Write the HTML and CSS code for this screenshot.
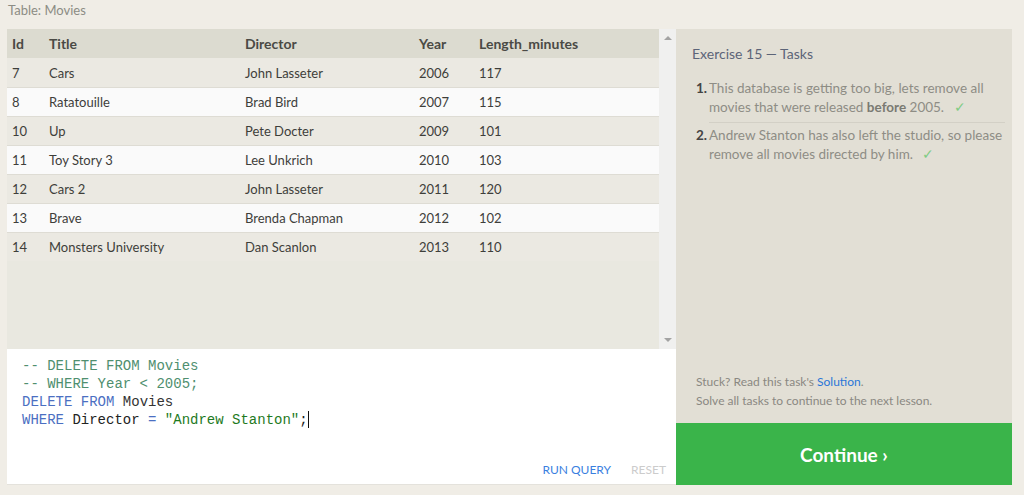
FILE: index.html
```html
<!DOCTYPE html>
<html>
<head>
<meta charset="utf-8">
<link rel="stylesheet" href="styles.css">
</head>
<body>
<div class="page">
  <div class="caption">Table: Movies</div>
  <div class="main">
    <div class="left">
      <div class="table-wrap">
        <div class="table-area">
          <table class="grid">
            <colgroup><col class="c-id"><col class="c-title"><col class="c-dir"><col class="c-year"><col></colgroup>
            <thead>
              <tr><th>Id</th><th>Title</th><th>Director</th><th>Year</th><th>Length_minutes</th></tr>
            </thead>
            <tbody>
              <tr><td>7</td><td>Cars</td><td>John Lasseter</td><td>2006</td><td>117</td></tr>
              <tr><td>8</td><td>Ratatouille</td><td>Brad Bird</td><td>2007</td><td>115</td></tr>
              <tr><td>10</td><td>Up</td><td>Pete Docter</td><td>2009</td><td>101</td></tr>
              <tr><td>11</td><td>Toy Story 3</td><td>Lee Unkrich</td><td>2010</td><td>103</td></tr>
              <tr><td>12</td><td>Cars 2</td><td>John Lasseter</td><td>2011</td><td>120</td></tr>
              <tr><td>13</td><td>Brave</td><td>Brenda Chapman</td><td>2012</td><td>102</td></tr>
              <tr><td>14</td><td>Monsters University</td><td>Dan Scanlon</td><td>2013</td><td>110</td></tr>
            </tbody>
          </table>
        </div>
        <div class="scrollbar">
          <span class="arrow up"></span>
          <span class="arrow down"></span>
        </div>
      </div>
      <div class="editor">
        <pre class="code"><span class="cm">-- DELETE FROM Movies</span>
<span class="cm">-- WHERE Year &lt; 2005;</span>
<span class="kw">DELETE FROM</span> <span class="id2">Movies</span>
<span class="kw">WHERE</span> Director <span class="kw">=</span> <span class="str">"Andrew Stanton"</span>;<span class="cursor"></span></pre>
        <div class="actions">
          <span class="run">RUN QUERY</span>
          <span class="reset">RESET</span>
        </div>
      </div>
    </div>
    <div class="right">
      <div class="panel">
        <div class="ex-title">Exercise 15 — Tasks</div>
        <ol class="tasks">
          <li><span class="num">1.</span><span class="txt">This database is getting too big, lets remove all movies that were released <b>before</b> 2005. <span class="check">✓</span></span></li>
          <li><span class="num">2.</span><span class="txt">Andrew Stanton has also left the studio, so please remove all movies directed by him. <span class="check">✓</span></span></li>
        </ol>
        <div class="help">
          <div>Stuck? Read this task's <span class="link">Solution</span>.</div>
          <div>Solve all tasks to continue to the next lesson.</div>
        </div>
      </div>
      <div class="continue">Continue ›</div>
    </div>
  </div>
</div>
</body>
</html>
```
FILE: styles.css
```css
* { box-sizing: border-box; }
html, body { margin: 0; padding: 0; }
body {
  background: #f0ede6;
  font-family: Lato, "Open Sans", sans-serif;
  width: 1024px;
  height: 495px;
  overflow: hidden;
}
.page { padding: 0 0 0 7px; }
.caption {
  height: 29px;
  padding: 2px 0 0 1px;
  font-size: 13px;
  color: #8c8c84;
}
.main { display: flex; }
.left { width: 669px; display: flex; flex-direction: column; }
.table-wrap { height: 320px; display: flex; background: #e9e8e0; }
.table-area { flex: 1; }
.scrollbar {
  width: 17px;
  background: #f0f0ef;
  display: flex;
  flex-direction: column;
  justify-content: space-between;
  align-items: center;
  padding: 7px 0 7px;
}
.arrow { width: 0; height: 0; border-left: 4px solid transparent; border-right: 4px solid transparent; }
.arrow.up { border-bottom: 4px solid #a3a3a3; }
.arrow.down { border-top: 4px solid #a3a3a3; }
.grid { border-collapse: collapse; width: 100%; table-layout: fixed; font-size: 13px; }
.c-id { width: 37px; }
.c-title { width: 196px; }
.c-dir { width: 174px; }
.c-year { width: 60px; }
.grid th, .grid td { text-align: left; padding: 1px 0 0 5px; height: 29px; white-space: nowrap; }
.grid th { background: #dcdbd0; color: #4a4a45; font-weight: 700; font-size: 14px; padding-top: 0; }
.grid td { color: #3e3e3a; border-top: 1px solid #dedcd4; }
.grid tbody tr:nth-child(odd) td { background: #ebe9e2; }
.grid tbody tr:nth-child(even) td { background: #fafafa; }
.grid tbody tr:first-child td { border-top: none; }
.editor {
  height: 136px;
  background: #fff;
  border-bottom: 1px solid #e4e2dc;
  display: flex;
  flex-direction: column;
  justify-content: space-between;
}
.code {
  margin: 0;
  padding: 8px 0 0 15px;
  font-family: "Liberation Mono", "DejaVu Sans Mono", monospace;
  font-size: 14px;
  line-height: 18px;
  color: #222;
}
.cm { color: #4f8f6f; }
.kw { color: #4b6fc2; }
.id2 { color: #333; }
.str { color: #1e7a1e; }
.cursor { display: inline-block; width: 1px; height: 17px; background: #111; vertical-align: -4px; }
.actions {
  display: flex;
  justify-content: flex-end;
  gap: 20px;
  padding: 0 10px 7px 0;
  font-size: 12px;
}
.run { color: #3a7fdf; }
.reset { color: #cccccc; }
.right { width: 336px; display: flex; flex-direction: column; }
.panel {
  flex: 1;
  background: #e2dfd5;
  padding: 16px 7px 13px 16px;
  display: flex;
  flex-direction: column;
}
.ex-title { font-size: 14px; color: #5c6478; margin-bottom: 17px; }
.tasks { list-style: none; margin: 0; padding: 0 0 0 4px; }
.tasks li { display: flex; font-size: 13.5px; line-height: 19px; color: #8e8d85; }
.tasks li + li { margin-top: 3px; }
.tasks li:first-child .txt { border-bottom: 1px solid #d3d0c6; padding-bottom: 5px; }
.num { width: 13px; flex: none; font-weight: 700; color: #444; }
.txt { flex: 1; }
.txt b { color: #7a7a72; }
.check { color: #7fcc84; margin-left: 6px; }
.help { margin-top: auto; font-size: 12px; line-height: 19px; color: #8a8882; padding-left: 4px; }
.link { color: #2a76d8; }
.continue {
  height: 62px;
  background: #3ab44a;
  color: #fff;
  font-size: 19px;
  font-weight: 700;
  display: flex;
  align-items: center;
  justify-content: center;
}
```
